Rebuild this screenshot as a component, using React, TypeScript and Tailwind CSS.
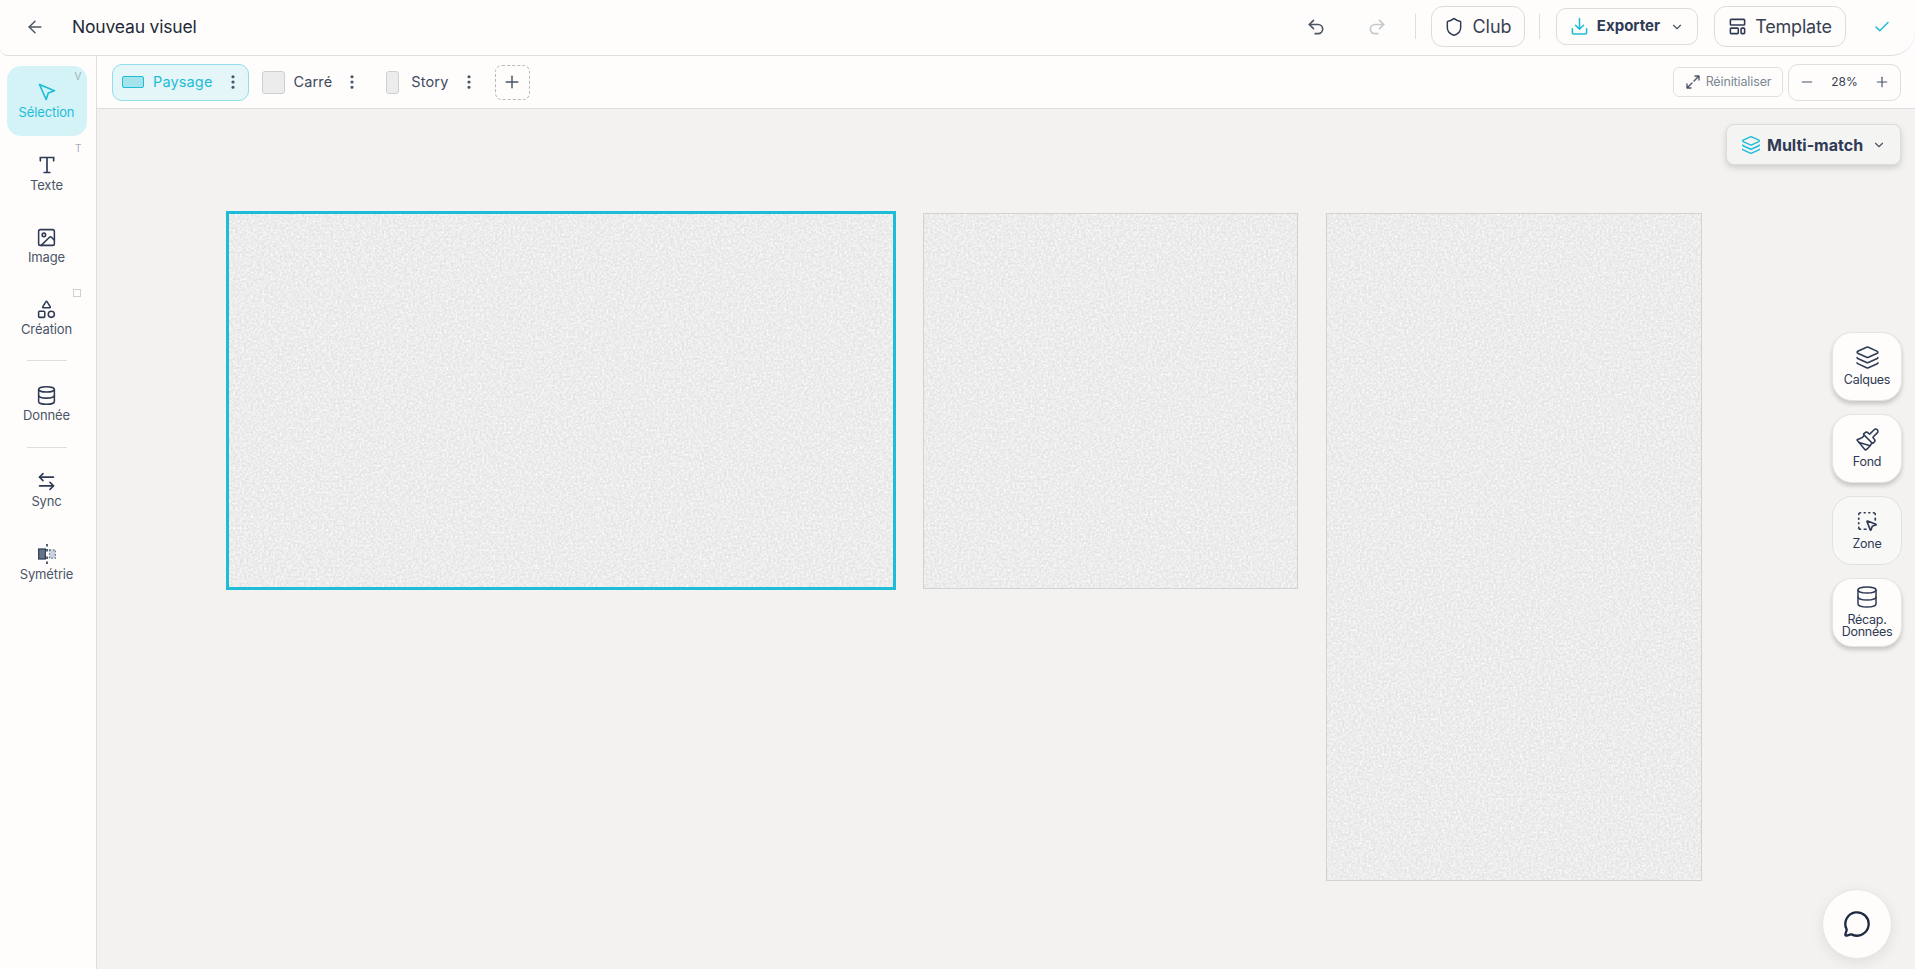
import { useId } from "react";
import type { ReactNode } from "react";
import {
  ArrowLeft,
  ArrowLeftRight,
  Check,
  ChevronDown,
  Database,
  EllipsisVertical,
  Image,
  Layers,
  MessageCircle,
  Minus,
  Paintbrush,
  Plus,
  Redo2,
  Shapes,
  Shield,
  SquareDashedMousePointer,
  Undo2,
} from "lucide-react";

function CursorIcon() {
  return (
    <svg width="20" height="20" viewBox="0 0 24 24" fill="none" stroke="currentColor" strokeWidth="2" strokeLinejoin="round" strokeLinecap="round">
      <path d="M3 3l18 7.5-7.5 2.8L11 21z" />
    </svg>
  );
}

function SerifT() {
  return (
    <svg width="20" height="20" viewBox="0 0 24 24" fill="none" stroke="currentColor" strokeWidth="2" strokeLinecap="round">
      <path d="M4 7V3h16v4M12 3v18M8.5 21h7" />
    </svg>
  );
}

function SymmetryIcon() {
  return (
    <svg width="20" height="20" viewBox="0 0 24 24">
      <path d="M12 0v3M12 6v3M12 15v3M12 21v3" stroke="#334155" strokeWidth="2" />
      <rect x="2" y="6" width="8" height="12" fill="#64748b" stroke="#334155" strokeWidth="1.5" />
      <rect x="15" y="7" width="7" height="10" fill="#cbd5e1" stroke="#64748b" strokeWidth="1.5" strokeDasharray="2 2" />
    </svg>
  );
}

function TemplateIcon() {
  return (
    <svg width="19" height="19" viewBox="0 0 24 24" fill="none" stroke="currentColor" strokeWidth="2" strokeLinejoin="round">
      <rect x="3" y="3" width="18" height="7" rx="1" />
      <rect x="3" y="14" width="10" height="7" rx="1" />
      <rect x="16.5" y="14" width="4.5" height="7" rx="1" />
    </svg>
  );
}

function ExportIcon() {
  return (
    <svg width="19" height="19" viewBox="0 0 24 24" fill="none" stroke="currentColor" strokeWidth="2" strokeLinecap="round" strokeLinejoin="round">
      <path d="M12 2v13M7 10.5l5 5 5-5M3 15v5a1.5 1.5 0 0 0 1.5 1.5h15A1.5 1.5 0 0 0 21 20v-5" />
    </svg>
  );
}

function ExpandIcon() {
  return (
    <svg width="16" height="16" viewBox="0 0 24 24" fill="none" stroke="currentColor" strokeWidth="2" strokeLinecap="round" strokeLinejoin="round">
      <path d="M15 3h6v6M21 3l-7.5 7.5M9 21H3v-6M3 21l7.5-7.5" />
    </svg>
  );
}

function SideItem({ icon, label, active, hint }: { icon: ReactNode; label: string; active?: boolean; hint?: ReactNode }) {
  return (
    <div
      className={
        "relative flex h-[70px] w-[80px] flex-col items-center rounded-[14px] pt-[16px] " +
        (active ? "bg-[#d3f3f7] text-[#1fbcd7]" : "text-[#2f3a55]")
      }
    >
      {hint}
      <div className="flex h-[20px] items-center">{icon}</div>
      <span className={"mt-[1px] text-[13px] leading-[18px] tracking-[-0.01em] " + (active ? "" : "text-[#4a5568]")}>{label}</span>
    </div>
  );
}

function Format({ swatch, label, active }: { swatch: ReactNode; label: string; active?: boolean }) {
  return (
    <div
      className={
        "flex h-[37px] items-center rounded-[10px] border " +
        (active ? "border-[#8fdfea] bg-[#e4f6f8] text-[#1fbcd7]" : "border-transparent text-[#3f4a5f]")
      }
    >
      {swatch}
      <span className="text-[14.5px] leading-none tracking-[0.01em]">{label}</span>
      <EllipsisVertical size={18} strokeWidth={2.25} className="ml-[11px] mr-[6px] text-[#475569]" />
    </div>
  );
}

function Board({ className, children }: { className: string; children?: ReactNode }) {
  return <div className={"relative shrink-0 overflow-hidden bg-[#e4e4e4] " + className}>{children}</div>;
}

function Noise() {
  const id = useId();
  return (
    <svg className="absolute inset-0 h-full w-full">
      <filter id={id} x="0" y="0" width="100%" height="100%">
        <feTurbulence type="fractalNoise" baseFrequency="0.45" numOctaves="3" seed="4" />
        <feColorMatrix values="0 0 0 0 1  0 0 0 0 1  0 0 0 0 1  1.6 0 0 0 -0.5" />
      </filter>
      <rect width="100%" height="100%" filter={`url(#${id})`} />
    </svg>
  );
}

function FloatTile({ icon, label, flat, compact }: { icon: ReactNode; label: ReactNode; flat?: boolean; compact?: boolean }) {
  return (
    <div
      className={
        "flex h-[69px] w-[70px] flex-col items-center rounded-[20px] border text-[#2f3a55] " +
        (flat
          ? "border-[#e2e2e0] bg-[#f8f8f7]"
          : "border-[#e4e4e2] bg-[#fefdfc] shadow-[0_3px_4px_rgba(0,0,0,0.18)]")
      }
    >
      <div className={(compact ? "mt-[6px]" : "mt-[12px]") + " flex h-[24px] items-center"}>{icon}</div>
      <div className="mt-[5px] text-center text-[12.5px] leading-[12px] tracking-[-0.02em]">{label}</div>
    </div>
  );
}

export default function App() {
  return (
    <div className="flex h-[969px] w-full flex-col overflow-hidden bg-[#fefdfc] font-['Inter',sans-serif] text-[#1f2937]">
      <header className="flex h-[56px] shrink-0 items-center rounded-bl-[8px] rounded-br-[24px] border-b border-[#dedede] pb-[2px] pl-[25px] pr-[24px]">
        <ArrowLeft size={20} strokeWidth={1.75} className="text-[#4b5563]" />
        <h1 className="ml-[27px] text-[17.5px] leading-none tracking-[-0.01em] text-[#1f2937]">Nouveau visuel</h1>
        <div className="flex-1" />
        <Undo2 size={20} strokeWidth={2} className="text-[#4b5563]" />
        <Redo2 size={20} strokeWidth={2} className="ml-[41px] text-[#c4c8cc]" />
        <div className="ml-[28px] h-[25px] w-px bg-[#dedede]" />
        <button className="ml-[15px] flex h-[41px] w-[94px] items-center justify-center gap-[8px] rounded-[12px] border border-[#dcdcdc] text-[18px] text-[#374151]">
          <Shield size={20} strokeWidth={1.75} className="text-[#2f3a55]" />
          Club
        </button>
        <div className="ml-[14px] h-[25px] w-px bg-[#dedede]" />
        <button className="ml-[16px] flex h-[37px] w-[142px] items-center justify-center gap-[8px] rounded-[10px] border border-[#dcdcdc] text-[15px] font-bold text-[#2f3a55]">
          <span className="text-[#1fbcd7]">
            <ExportIcon />
          </span>
          Exporter
          <ChevronDown size={14} className="ml-[2px] text-[#4b5563]" />
        </button>
        <button className="ml-[16px] flex h-[41px] w-[132px] items-center justify-center gap-[8px] rounded-[12px] border border-[#dcdcdc] text-[18px] tracking-[-0.01em] text-[#374151]">
          <span className="text-[#2f3a55]">
            <TemplateIcon />
          </span>
          Template
        </button>
        <Check size={18} strokeWidth={2} className="ml-[27px] text-[#1fbcd7]" />
      </header>

      <div className="flex min-h-0 flex-1">
        <aside className="flex w-[97px] shrink-0 flex-col items-center border-r border-[#dedede] pr-[3px] pt-[10px]">
          <SideItem
            active
            label="Sélection"
            icon={<CursorIcon />}
            hint={<span className="absolute right-[5px] top-[3px] text-[10px] leading-[14px] text-[#a8aeb5]">V</span>}
          />
          <div className="h-[3px]" />
          <SideItem
            label="Texte"
            icon={<SerifT />}
            hint={<span className="absolute right-[5px] top-[2px] text-[10px] leading-[14px] text-[#a8aeb5]">T</span>}
          />
          <div className="h-[2px]" />
          <SideItem label="Image" icon={<Image size={21} strokeWidth={1.75} />} />
          <div className="h-[2px]" />
          <SideItem
            label="Création"
            icon={<Shapes size={21} strokeWidth={1.75} />}
            hint={<span className="absolute right-[6px] top-[6px] h-[8px] w-[8px] border border-[#cfcfcf]" />}
          />
          <div className="mb-[8px] mt-[7px] h-px w-[40px] bg-[#dedede]" />
          <SideItem label="Donnée" icon={<Database size={21} strokeWidth={1.75} />} />
          <div className="mb-[7px] mt-[8px] h-px w-[40px] bg-[#dedede]" />
          <SideItem label="Sync" icon={<ArrowLeftRight size={21} strokeWidth={1.75} />} />
          <div className="h-[3px]" />
          <SideItem label="Symétrie" icon={<SymmetryIcon />} />
        </aside>

        <main className="flex min-w-0 flex-1 flex-col">
          <div className="flex h-[53px] shrink-0 items-center border-b border-[#dedede] pl-[15px] pr-[14px]">
            <Format
              active
              label="Paysage"
              swatch={<span className="ml-[9px] mr-[9px] h-[12px] w-[22px] rounded-[2px] border border-[#1fbcd7] bg-[#a5e3ec]" />}
            />
            <div className="ml-[12px] flex">
              <Format
                label="Carré"
                swatch={<span className="mr-[9px] h-[23px] w-[23px] rounded-[3px] border border-[#cfcfcf] bg-[#ececec]" />}
              />
            </div>
            <div className="ml-[17px] flex">
              <Format
                label="Story"
                swatch={<span className="mr-[12px] h-[23px] w-[13px] rounded-[3px] border border-[#cfcfcf] bg-[#ececec]" />}
              />
            </div>
            <button className="ml-[10px] flex h-[35px] w-[35px] items-center justify-center rounded-[7px] border border-dashed border-[#b8b8b8] text-[#475569]">
              <Plus size={20} strokeWidth={1.75} />
            </button>
            <div className="flex-1" />
            <button className="flex h-[30px] w-[110px] items-center justify-center gap-[5px] rounded-[6px] border border-[#e0e0e0] text-[12.5px] tracking-[-0.01em] text-[#7b8794]">
              <span className="text-[#4b5563]">
                <ExpandIcon />
              </span>
              Réinitialiser
            </button>
            <div className="ml-[5px] flex h-[37px] w-[113px] items-center justify-between rounded-[10px] border border-[#dedede] px-[10px] text-[12px] text-[#374151]">
              <Minus size={16} strokeWidth={1.75} className="text-[#475569]" />
              <span>28%</span>
              <Plus size={16} strokeWidth={1.75} className="text-[#475569]" />
            </div>
          </div>

          <div className="relative min-h-0 flex-1 bg-[#f3f2f1]">
            <div className="flex items-start gap-[27px] pl-[129px] pt-[102px]">
              <Board className="h-[379px] w-[670px] border-[3px] border-[#1fbcd7]">
                <Noise />
              </Board>
              <Board className="mt-[2px] h-[376px] w-[375px] border border-[#d2d2d0]">
                <Noise />
              </Board>
              <Board className="ml-[1px] mt-[2px] h-[668px] w-[376px] border border-[#d2d2d0]">
                <Noise />
              </Board>
            </div>

            <button className="absolute right-[14px] top-[15px] flex h-[41px] w-[175px] items-center rounded-[8px] border border-[#dcdcdc] bg-[#f4f4f3] pl-[14px] text-[16px] font-bold text-[#2f3a55] shadow-[0_3px_6px_rgba(0,0,0,0.15)]">
              <Layers size={20} strokeWidth={1.75} className="mr-[6px] text-[#1fbcd7]" />
              Multi-match
              <ChevronDown size={14} className="ml-[9px] text-[#4b5563]" />
            </button>

            <div className="absolute right-[13px] top-[223px] flex flex-col gap-[13px]">
              <FloatTile icon={<Layers size={25} strokeWidth={1.5} />} label="Calques" />
              <FloatTile icon={<Paintbrush size={25} strokeWidth={1.5} />} label="Fond" />
              <FloatTile flat icon={<SquareDashedMousePointer size={22} strokeWidth={1.75} />} label="Zone" />
              <FloatTile
                compact
                icon={<Database size={24} strokeWidth={1.5} />}
                label={
                  <>
                    Récap.
                    <br />
                    Données
                  </>
                }
              />
            </div>

            <button className="absolute bottom-[10px] right-[23px] flex h-[70px] w-[70px] items-center justify-center rounded-full border border-[#e6e6e4] bg-[#fefdfc] text-[#1e2a44] shadow-[0_4px_14px_rgba(0,0,0,0.08)]">
              <MessageCircle size={28} strokeWidth={2} />
            </button>
          </div>
        </main>
      </div>
    </div>
  );
}
